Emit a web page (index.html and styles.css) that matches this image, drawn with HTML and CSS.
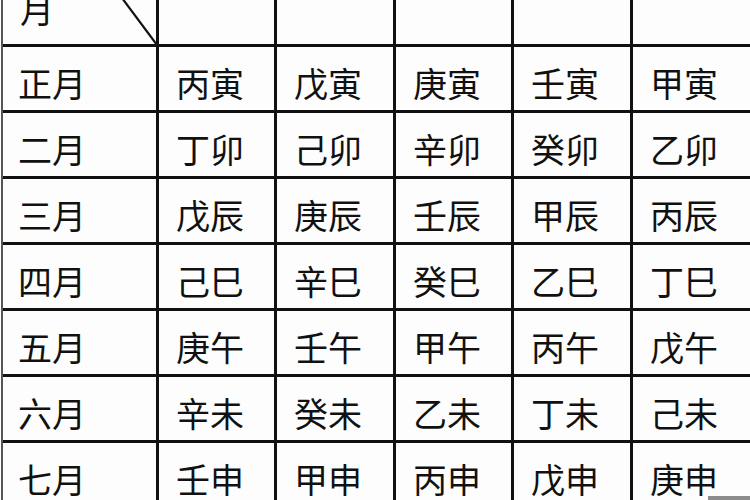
FILE: index.html
```html
<!DOCTYPE html>
<html lang="zh">
<head>
<meta charset="utf-8">
<title>月干支表</title>
<link rel="stylesheet" href="styles.css">
</head>
<body>
<div class="table">
  <div class="cell head-corner">
    <span class="corner-label">月</span>
    <svg class="diag" width="153" height="44" viewBox="0 0 153 44"><line x1="119" y1="-2" x2="154" y2="45" stroke="#111" stroke-width="2.2"/></svg>
  </div>
  <div class="cell"></div><div class="cell"></div><div class="cell"></div><div class="cell"></div><div class="cell"></div>

  <div class="cell month">正月</div><div class="cell">丙寅</div><div class="cell">戊寅</div><div class="cell">庚寅</div><div class="cell">壬寅</div><div class="cell">甲寅</div>
  <div class="cell month">二月</div><div class="cell">丁卯</div><div class="cell">己卯</div><div class="cell">辛卯</div><div class="cell">癸卯</div><div class="cell">乙卯</div>
  <div class="cell month">三月</div><div class="cell">戊辰</div><div class="cell">庚辰</div><div class="cell">壬辰</div><div class="cell">甲辰</div><div class="cell">丙辰</div>
  <div class="cell month">四月</div><div class="cell">己巳</div><div class="cell">辛巳</div><div class="cell">癸巳</div><div class="cell">乙巳</div><div class="cell">丁巳</div>
  <div class="cell month">五月</div><div class="cell">庚午</div><div class="cell">壬午</div><div class="cell">甲午</div><div class="cell">丙午</div><div class="cell">戊午</div>
  <div class="cell month">六月</div><div class="cell">辛未</div><div class="cell">癸未</div><div class="cell">乙未</div><div class="cell">丁未</div><div class="cell">己未</div>
  <div class="cell month">七月</div><div class="cell">壬申</div><div class="cell">甲申</div><div class="cell">丙申</div><div class="cell">戊申</div><div class="cell">庚申</div>
</div>
<div class="watermark"></div>
</body>
</html>
```
FILE: styles.css
```css
html, body {
  margin: 0;
  padding: 0;
  background: #ffffff;
  overflow: hidden;
  width: 750px;
  height: 500px;
}
.table {
  margin-left: 1px;
  border-left: 2px solid #555555;
  display: grid;
  grid-template-columns: 153px 115px 116px 115px 116px 117px;
  grid-template-rows: 44px repeat(7, 63px);
  gap: 3px;
  background: #111111;
  font-family: "Noto Sans CJK SC", "Noto Sans", sans-serif;
  font-size: 34px;
  line-height: 34px;
  color: #111111;
}
.cell {
  background: #fdfdfd;
  padding: 19px 0 0 17px;
  white-space: nowrap;
  overflow: hidden;
}
.month {
  padding-left: 15px;
}
.head-corner {
  position: relative;
  padding: 0 0 0 17px;
}
.corner-label {
  display: block;
  margin-top: -8px;
}
.diag {
  position: absolute;
  left: 0;
  top: 0;
}
.watermark {
  position: fixed;
  right: 0;
  bottom: 0;
  width: 42px;
  height: 4px;
  background: #8c8c8c;
}
```
